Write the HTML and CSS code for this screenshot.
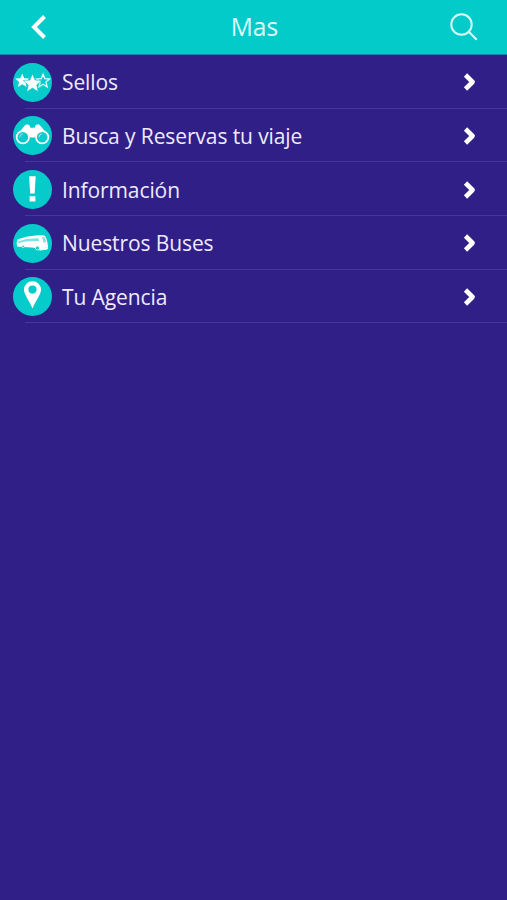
FILE: index.html
```
<!DOCTYPE html>
<html lang="es">
<head>
    <meta charset="UTF-8">
    <meta name="viewport" content="width=device-width, initial-scale=1.0">
    <title>Mas</title>
    <link rel="stylesheet" href="styles.css">
</head>
<body>
    <header class="header">
        <svg class="back" viewBox="0 0 16 26"><path d="M13.5 2.5 L3 13 L13.5 23.5"/></svg>
        <h1>Mas</h1>
        <svg class="search" viewBox="0 0 28 28"><circle cx="11.5" cy="11.5" r="10.2"/><path d="M18.8 18.8 L26.7 26.7"/></svg>
    </header>

    <ul class="menu">
        <li>
            <svg class="icon" viewBox="0 0 38 38">
                <circle class="disc" cx="19" cy="19" r="19"/>
                <path class="fill" d="M9 10.2l1.900 4.600 5 .4-3.800 3.300 1.200 4.900L9 20.800l-4.300 2.600 1.200-4.900-3.800-3.300 5-.4z"/>
                <path class="line" d="M29.300 11l1.700 4.200 4.600.4-3.500 3 1.100 4.500-3.900-2.400-3.900 2.400 1.100-4.500-3.500-3 4.600-.4z"/>
                <path class="star" d="M19 10.500l2.500 6.100 6.600.5-5 4.300 1.500 6.500-5.600-3.500-5.600 3.500 1.500-6.500-5-4.300 6.600-.5z"/>
            </svg>
            <span class="label">Sellos</span>
            <svg class="arrow" viewBox="0 0 13 20"><path d="M2.5 3 L9.6 10 L2.5 17"/></svg>
        </li>
        <li>
            <svg class="icon" viewBox="0 0 38 38">
                <circle class="disc" cx="19" cy="19" r="19"/>
                <path class="fill" d="M3.5 19L11.3 9.5c1-1.6 4.7-1.6 5.2.4l.4 1.6h4.2l.4-1.6c.5-2 4.2-2 5.2-.4L34.5 19l-5 3-7-3-1.5 2h-4l-1.5-2-7 3z"/>
                <circle class="lens" cx="9.6" cy="20.7" r="6"/>
                <circle class="lens" cx="28.4" cy="20.7" r="6"/>
                <path class="glint" d="M6.5 20.7a3.1 3.1 0 0 1 3.1-3.1M25.3 20.7a3.1 3.1 0 0 1 3.1-3.1"/>
            </svg>
            <span class="label">Busca y Reservas tu viaje</span>
            <svg class="arrow" viewBox="0 0 13 20"><path d="M2.5 3 L9.6 10 L2.5 17"/></svg>
        </li>
        <li>
            <svg class="icon" viewBox="0 0 38 38">
                <circle class="disc" cx="19" cy="19" r="19"/>
                <path class="fill" d="M15.7 6.2h6.4l-1 16.6h-4.4zM16.2 25.6h5.6v5.2h-5.6z"/>
            </svg>
            <span class="label">Información</span>
            <svg class="arrow" viewBox="0 0 13 20"><path d="M2.5 3 L9.6 10 L2.5 17"/></svg>
        </li>
        <li>
            <svg class="icon" viewBox="0 0 38 38">
                <circle class="disc" cx="19" cy="19" r="19"/>
                <path class="fill" d="M4.5 14.800Q14 11.200 24 10.900q5.500-.6 7.200.8 1.500 1.600 2.300 6 .9 4 .4 6.600l-1.500.9-6.200.5-5.500-2.600L4 22q-1.200-3.600.5-7.200z"/>
                <path class="glass" d="M5 16.800Q14 13.600 24.800 14l.6 2.600Q14 16.200 4.800 18.500z"/>
                <path class="glass" d="M28.300 13l2.300-.3q1.400 2.400 1.700 5l-2.600.5q-.6-3-1.400-5.200z"/>
                <path class="thin" d="M30.300 23.300l2.500-.3"/>
                <circle class="wheel" cx="10" cy="21.800" r="1.2"/>
                <circle class="wheel" cx="23.800" cy="23.400" r="1.900"/>
            </svg>
            <span class="label">Nuestros Buses</span>
            <svg class="arrow" viewBox="0 0 13 20"><path d="M2.5 3 L9.6 10 L2.5 17"/></svg>
        </li>
        <li>
            <svg class="icon" viewBox="0 0 38 38">
                <circle class="disc" cx="19" cy="19" r="19"/>
                <path class="fill" fill-rule="evenodd" d="M19 4.2a8.300 8.300 0 0 1 8.300 8.300c0 4.600-5 10.200-8.300 18.200-3.300-8-8.300-13.600-8.300-18.200a8.300 8.300 0 0 1 8.300-8.300zM19 8.300a4 4 0 1 0 0 8 4 4 0 0 0 0-8z"/>
            </svg>
            <span class="label">Tu Agencia</span>
            <svg class="arrow" viewBox="0 0 13 20"><path d="M2.5 3 L9.6 10 L2.5 17"/></svg>
        </li>
    </ul>
</body>
</html>
```
FILE: styles.css
```
body {
    margin: 0;
    min-height: 100vh;
    background-color: #301f87;
    font-family: "Open Sans", "Noto Sans", sans-serif;
    color: #efeafd;
}
.header {
    display: flex;
    align-items: center;
    justify-content: space-between;
    box-sizing: border-box;
    height: 55px;
    padding: 0 29px 1px 31px;
    background: linear-gradient(#03cbc9 54px, #2481a8 54px);
}
.header h1 {
    margin: 0 0 0 12px;
    font-size: 24.6px;
    font-weight: 400;
    line-height: 50px;
    color: #defcfa;
}
.header svg {
    fill: none;
    stroke: #fff;
}
.back {
    width: 16px;
    height: 26px;
    stroke-width: 4;
}
.header .search {
    width: 28px;
    height: 28px;
    stroke: #d8fbf8;
    stroke-width: 2;
}
.menu {
    margin: 0;
    padding: 0.3px 0 0;
    list-style: none;
}
.menu li {
    display: flex;
    align-items: center;
    box-sizing: border-box;
    height: 53.7px;
    padding: 0 31px 0 13px;
    background: linear-gradient(#46389b, #46389b) 25px 100% / 100% 1.3px no-repeat;
}
.icon {
    width: 39px;
    height: 39px;
}
.label {
    flex: 1;
    margin-left: 10px;
    font-size: 21px;
    line-height: 30px;
    letter-spacing: -0.1px;
}
.arrow {
    width: 13px;
    height: 20px;
    fill: none;
    stroke: #fff;
    stroke-width: 4.6;
    stroke-linejoin: round;
}
.disc {
    fill: #05cbca;
}
.fill {
    fill: #fff;
}
.star {
    fill: #fff;
    stroke: #05cbca;
    stroke-width: 0.6;
}
.line {
    fill: none;
    stroke: #e2fbfa;
    stroke-width: 1.3;
}
.lens {
    fill: #05cbca;
    stroke: #fff;
    stroke-width: 1.6;
}
.glint {
    fill: none;
    stroke: #9deeea;
    stroke-width: 1;
}
.glass {
    fill: #7fe3e1;
}
.thin {
    fill: none;
    stroke: #b9f3f1;
    stroke-width: 0.7;
}
.wheel {
    fill: #05cbca;
    stroke: #fff;
    stroke-width: 0.7;
}
```
